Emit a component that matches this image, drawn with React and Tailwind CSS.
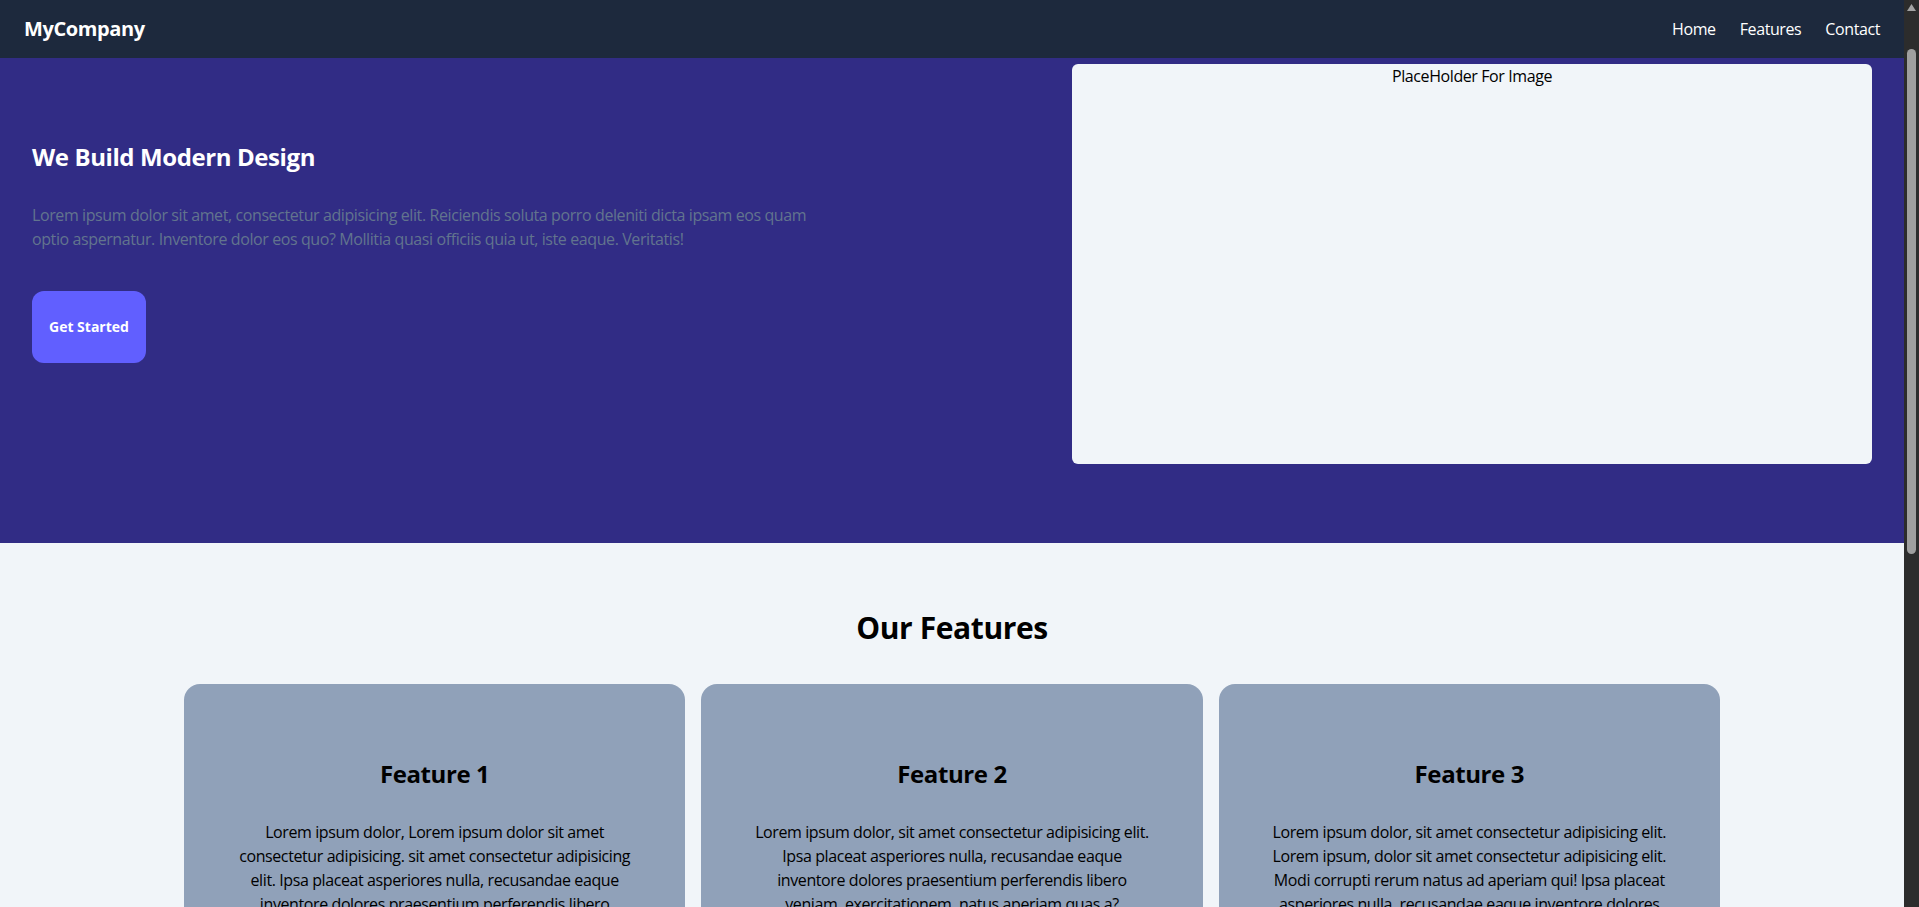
const FEATURES = [
  {
    title: "Feature 1",
    text: "Lorem ipsum dolor, Lorem ipsum dolor sit amet consectetur adipisicing. sit amet consectetur adipisicing elit. Ipsa placeat asperiores nulla, recusandae eaque inventore dolores praesentium perferendis libero veniam, exercitationem, natus aperiam quas a?",
  },
  {
    title: "Feature 2",
    text: "Lorem ipsum dolor, sit amet consectetur adipisicing elit. Ipsa placeat asperiores nulla, recusandae eaque inventore dolores praesentium perferendis libero veniam, exercitationem, natus aperiam quas a?",
  },
  {
    title: "Feature 3",
    text: "Lorem ipsum dolor, sit amet consectetur adipisicing elit. Lorem ipsum, dolor sit amet consectetur adipisicing elit. Modi corrupti rerum natus ad aperiam qui! Ipsa placeat asperiores nulla, recusandae eaque inventore dolores praesentium perferendis libero veniam, exercitationem, natus aperiam quas a?",
  },
];

function Navbar() {
  return (
    <nav className="flex h-[58px] items-center justify-between bg-slate-800 px-6">
      <a href="#" className="text-xl font-bold text-white">
        MyCompany
      </a>
      <ul className="flex items-center gap-6 text-base text-white">
        <li><a href="#">Home</a></li>
        <li><a href="#">Features</a></li>
        <li><a href="#">Contact</a></li>
      </ul>
    </nav>
  );
}

function Hero() {
  return (
    <section className="flex items-start justify-between bg-indigo-900 px-8 pt-[6px] pb-[79px]">
      <div className="mt-[77px] w-[780px]">
        <h1 className="text-2xl leading-8 font-bold text-white">We Build Modern Design</h1>
        <p className="mt-[30px] text-base leading-6 text-slate-500">
          Lorem ipsum dolor sit amet, consectetur adipisicing elit. Reiciendis soluta porro deleniti dicta ipsam eos quam optio aspernatur. Inventore dolor eos quo? Mollitia quasi officiis quia ut, iste eaque. Veritatis!
        </p>
        <button className="mt-10 h-[72px] rounded-xl bg-indigo-500 px-[17px] text-sm font-bold tracking-normal text-white">
          Get Started
        </button>
      </div>
      <div className="h-[400px] w-[800px] rounded-md bg-slate-100 text-center text-base leading-6 text-black">
        PlaceHolder For Image
      </div>
    </section>
  );
}

function Features() {
  return (
    <section className="bg-slate-100 pt-[67px] pb-16">
      <h2 className="text-center text-3xl leading-9 font-bold text-black">Our Features</h2>
      <div className="mx-auto mt-[38px] grid max-w-[1536px] grid-cols-3 gap-4">
        {FEATURES.map((f) => (
          <div key={f.title} className="rounded-2xl bg-slate-400 px-12 pt-[72px] pb-16 text-center">
            <h3 className="text-2xl leading-9 font-bold text-black">{f.title}</h3>
            <p className="mt-7 text-base leading-6 text-black">{f.text}</p>
          </div>
        ))}
      </div>
    </section>
  );
}

// page scrollbar as seen in the screenshot
function Scrollbar() {
  return (
    <div className="flex w-[15px] shrink-0 flex-col items-center bg-[#2c2c2c]">
      <svg width="9" height="7" viewBox="0 0 9 7" className="mt-[4px]">
        <path d="M4.5 0 L9 7 L0 7 Z" fill="#a3a3a3" />
      </svg>
      <div className="mt-[38px] h-[505px] w-[9px] rounded-full bg-[#9f9f9f]" />
    </div>
  );
}

export default function App() {
  return (
    <div className="flex h-screen overflow-hidden bg-slate-100 font-['Open_Sans',sans-serif] tracking-tight">
      <main className="min-w-0 flex-1 overflow-hidden">
        <Navbar />
        <Hero />
        <Features />
      </main>
      <Scrollbar />
    </div>
  );
}
